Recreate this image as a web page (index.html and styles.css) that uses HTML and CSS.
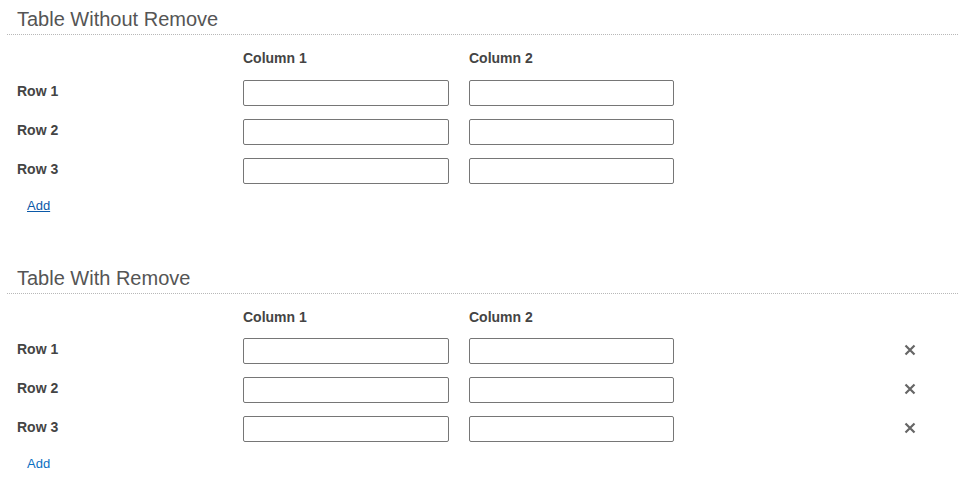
FILE: index.html
```html
<!DOCTYPE html>
<html>
<head>
<meta charset="utf-8">
<link rel="stylesheet" href="styles.css">
</head>
<body>
<section class="section">
  <h2 class="section-title">Table Without Remove</h2>
  <div class="grid">
    <div></div>
    <div class="col-head">Column 1</div>
    <div class="col-head">Column 2</div>
    <div></div>
    <div class="row-label">Row 1</div>
    <input class="cell" type="text">
    <input class="cell" type="text">
    <div></div>
    <div class="row-label">Row 2</div>
    <input class="cell" type="text">
    <input class="cell" type="text">
    <div></div>
    <div class="row-label">Row 3</div>
    <input class="cell" type="text">
    <input class="cell" type="text">
    <div></div>
  </div>
  <div class="add-row"><a class="add-link add-link--hover" href="#">Add</a></div>
</section>
<section class="section section--second">
  <h2 class="section-title">Table With Remove</h2>
  <div class="grid">
    <div></div>
    <div class="col-head">Column 1</div>
    <div class="col-head">Column 2</div>
    <div></div>
    <div class="row-label">Row 1</div>
    <input class="cell" type="text">
    <input class="cell" type="text">
    <button class="remove" type="button" aria-label="Remove"><svg viewBox="0 0 12 12" width="12" height="12"><path d="M1.5 1.5L10.5 10.5M10.5 1.5L1.5 10.5" stroke="#666" stroke-width="2.2" fill="none"/></svg></button>
    <div class="row-label">Row 2</div>
    <input class="cell" type="text">
    <input class="cell" type="text">
    <button class="remove" type="button" aria-label="Remove"><svg viewBox="0 0 12 12" width="12" height="12"><path d="M1.5 1.5L10.5 10.5M10.5 1.5L1.5 10.5" stroke="#666" stroke-width="2.2" fill="none"/></svg></button>
    <div class="row-label">Row 3</div>
    <input class="cell" type="text">
    <input class="cell" type="text">
    <button class="remove" type="button" aria-label="Remove"><svg viewBox="0 0 12 12" width="12" height="12"><path d="M1.5 1.5L10.5 10.5M10.5 1.5L1.5 10.5" stroke="#666" stroke-width="2.2" fill="none"/></svg></button>
  </div>
  <div class="add-row"><a class="add-link" href="#">Add</a></div>
</section>
</body>
</html>
```
FILE: styles.css
```css
html, body {
  margin: 0;
  padding: 0;
  background: #fff;
}
body {
  font-family: "Liberation Sans", Arial, sans-serif;
  color: #444;
}
.section {
  margin: 0 1px 0 7px;
  padding-top: 7px;
}
.section--second {
  margin-top: 46px;
}
.section-title {
  margin: 0;
  padding: 0 0 3px 10px;
  font-size: 20px;
  line-height: 24px;
  font-weight: normal;
  color: #555;
  border-bottom: 1px dotted #b8b8b8;
}
.grid {
  display: grid;
  grid-template-columns: 226px 226px 1fr 20px;
  grid-auto-rows: auto;
  row-gap: 13px;
  align-items: center;
  margin-top: 15px;
  padding: 0 38px 0 10px;
}
.col-head {
  font-size: 14px;
  line-height: 16px;
  padding-bottom: 1px;
  font-weight: bold;
  color: #444;
}
.section--second .col-head {
  padding-bottom: 0;
}
.row-label {
  font-size: 14px;
  line-height: 16px;
  padding-bottom: 4px;
  font-weight: bold;
  color: #444;
}
.cell {
  box-sizing: border-box;
  width: 206px;
  height: 26px;
  margin: 0;
  padding: 2px 4px;
  border: 1px solid #767676;
  border-radius: 2px;
  background: #fff;
  font: 13px "Liberation Sans", Arial, sans-serif;
}
.grid .cell:nth-child(4n+3) {
  width: 205px;
}
.remove {
  display: flex;
  align-items: center;
  justify-content: center;
  width: 20px;
  height: 20px;
  padding: 0 0 2px;
  border: 0;
  background: transparent;
  cursor: pointer;
}
.remove svg {
  display: block;
}
.add-row {
  margin-top: 14px;
  padding-left: 20px;
  font-size: 13px;
  line-height: 15px;
}
.add-link {
  color: #0a6fc2;
  text-decoration: none;
}
.add-link--hover {
  color: #0b59a8;
  text-decoration: underline;
}
```
